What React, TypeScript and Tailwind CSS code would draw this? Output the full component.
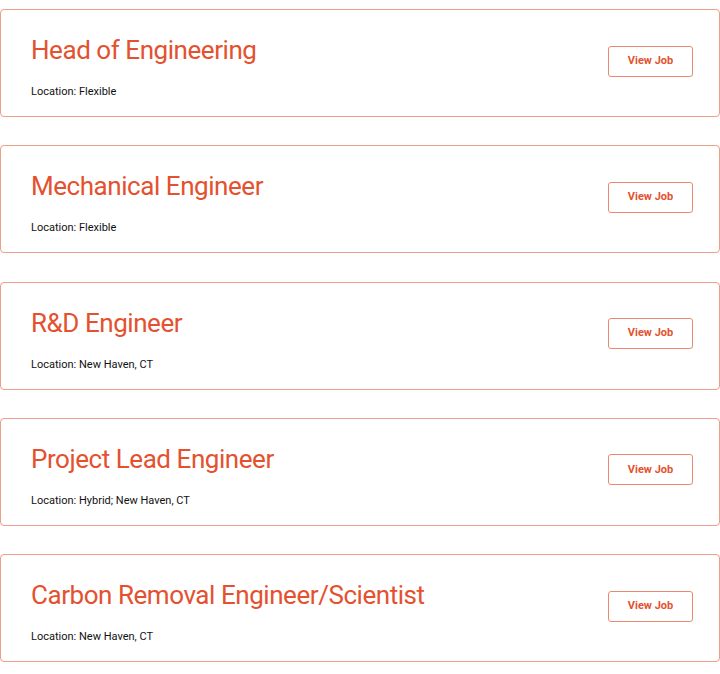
import React from "react";

const jobs = [
  { title: "Head of Engineering", location: "Flexible" },
  { title: "Mechanical Engineer", location: "Flexible" },
  { title: "R&D Engineer", location: "New Haven, CT" },
  { title: "Project Lead Engineer", location: "Hybrid; New Haven, CT" },
  { title: "Carbon Removal Engineer/Scientist", location: "New Haven, CT" },
];

const JobCard: React.FC<{ title: string; location: string }> = ({ title, location }) => (
  <div className="flex items-center justify-between rounded-[4px] border border-[#ec9e88] bg-white pl-[30px] pr-[26px]">
    <div className="pt-[24px] pb-[16px]">
      <h2 className="text-[26px] leading-[32px] font-normal tracking-[-0.45px] text-[#e4512f]">{title}</h2>
      <p className="mt-[18px] text-[11px] leading-[16px] text-[#111]">Location: {location}</p>
    </div>
    <button className="mb-[4px] h-[31px] w-[85px] rounded-[3px] border border-[#e98a70] bg-white text-[11px] font-bold text-[#e4512f]">
      View Job
    </button>
  </div>
);

export default function App() {
  return (
    <div className="min-h-[674px] bg-white pt-[9px] font-['Roboto',sans-serif]">
      <div className="flex w-[720px] flex-col gap-[28.3px]">
        {jobs.map((job) => (
          <JobCard key={job.title} title={job.title} location={job.location} />
        ))}
      </div>
    </div>
  );
}
